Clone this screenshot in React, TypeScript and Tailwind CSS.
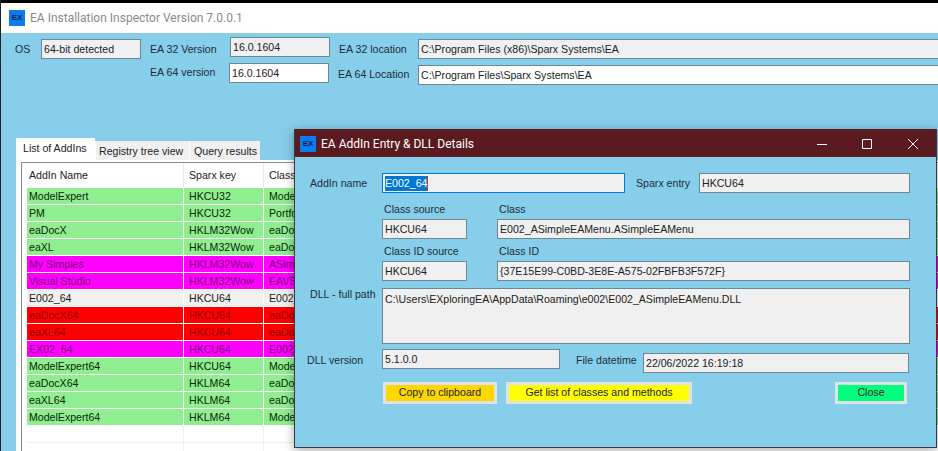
import { ReactNode } from 'react';

const GREEN = 'bg-[#90ee90] text-[#0c1f0c]';
const MAGENTA = 'bg-[#ff00ff] text-[#7d007d]';
const RED = 'bg-[#ff0000] text-[#8f0000]';

const ROWS: { name: string; key: string; cls: string; tone: string }[] = [
  { name: 'ModelExpert',   key: 'HKCU32',    cls: 'ModelExpert.Addin',  tone: GREEN },
  { name: 'PM',            key: 'HKCU32',    cls: 'Portfolio.Addin',    tone: GREEN },
  { name: 'eaDocX',        key: 'HKLM32Wow', cls: 'eaDocX.Addin',       tone: GREEN },
  { name: 'eaXL',          key: 'HKLM32Wow', cls: 'eaDocX.eaXL',        tone: GREEN },
  { name: 'My Simples',    key: 'HKLM32Wow', cls: 'ASimple.Menu',       tone: MAGENTA },
  { name: 'Visual Studio', key: 'HKLM32Wow', cls: 'EAVS.Addin',         tone: MAGENTA },
  { name: 'E002_64',       key: 'HKCU64',    cls: 'E002_ASimpleEAMenu', tone: 'bg-[#f0f0f0] text-[#1c1c1c]' },
  { name: 'eaDocX64',      key: 'HKCU64',    cls: 'eaDocX.Addin',       tone: RED },
  { name: 'eaXL64',        key: 'HKCU64',    cls: 'eaDocX.eaXL',        tone: RED },
  { name: 'EX02_64',       key: 'HKCU64',    cls: 'E002_ASimpleEAMenu', tone: MAGENTA },
  { name: 'ModelExpert64', key: 'HKCU64',    cls: 'ModelExpert.Addin',  tone: GREEN },
  { name: 'eaDocX64',      key: 'HKLM64',    cls: 'eaDocX.Addin',       tone: GREEN },
  { name: 'eaXL64',        key: 'HKLM64',    cls: 'eaDocX.eaXL',        tone: GREEN },
  { name: 'ModelExpert64', key: 'HKLM64',    cls: 'ModelExpert.Addin',  tone: GREEN },
];

function Field({ className = '', children }: { className?: string; children?: ReactNode }) {
  return (
    <div className={`h-[20px] shrink-0 flex items-center overflow-hidden whitespace-nowrap pl-[2px] pt-[1px] border border-[#6d8797] text-[#222] ${className}`}>
      {children}
    </div>
  );
}

function Label({ className = '', children }: { className?: string; children: ReactNode }) {
  return <div className={`shrink-0 whitespace-nowrap leading-[13px] text-[#1d2d36] ${className}`}>{children}</div>;
}

function AppIcon() {
  return (
    <div className="w-4 h-4 shrink-0 bg-[#0a7cf0] flex items-center justify-center text-[8px] leading-none font-bold text-[#06204a] font-['Liberation_Sans',sans-serif]">
      EX
    </div>
  );
}

function Cell({ className = '', children }: { className?: string; children?: ReactNode }) {
  return <div className={`shrink-0 h-full pt-[1px] flex items-center overflow-hidden whitespace-nowrap ${className}`}>{children}</div>;
}

function ListTable() {
  return (
    <div className="ml-[5px] mt-[1px] h-[300px] border border-[#8a8a8a] border-r-0 pl-[5px] bg-white overflow-hidden">
      <div className="flex h-[25px] text-[#222]">
        <Cell className="w-[157px] pl-[2px] border-r border-[#ececec]">AddIn Name</Cell>
        <Cell className="w-[80px] pl-[5px] border-r border-[#ececec]">Sparx key</Cell>
        <Cell className="w-[690px] pl-[5px]">Class</Cell>
      </div>
      {ROWS.map((r, i) => (
        <div key={i} className={`flex h-[17px] border-b border-white ${r.tone}`}>
          <Cell className="w-[157px] pl-[2px] border-r border-white">{r.name}</Cell>
          <Cell className="w-[80px] pl-[5px] border-r border-white">{r.key}</Cell>
          <Cell className="w-[690px] pl-[5px]">{r.cls}</Cell>
        </div>
      ))}
      {[0, 1].map(i => (
        <div key={i} className="flex h-[17px] border-b border-[#f0f0f0]">
          <Cell className="w-[157px] border-r border-[#f0f0f0]" />
          <Cell className="w-[80px] border-r border-[#f0f0f0]" />
        </div>
      ))}
    </div>
  );
}

function DetailsDialog() {
  return (
    <div className="absolute left-[293px] top-[129px] w-[643px] h-[319px] border border-[#3a3a3a] border-t-[#5a1a1f] bg-[#87ceeb] shadow-[0_2px_10px_rgba(0,0,0,0.35)]">
      <div className="h-[27px] bg-[#5a1a1f] flex items-center pl-[5px] text-white text-[12px] font-['Roboto',sans-serif]">
        <AppIcon />
        <span className="ml-[5px]">EA AddIn Entry &amp; DLL Details</span>
        <div className="ml-auto flex items-center">
          <svg width="10" height="10" viewBox="0 0 10 10" className="mr-[35px]"><path d="M0 5.5h10" stroke="#fff" /></svg>
          <svg width="10" height="10" viewBox="0 0 10 10" className="mr-[36px]"><path d="M.5.5h9v9h-9z" fill="none" stroke="#fff" /></svg>
          <svg width="10" height="10" viewBox="0 0 10 10" className="mr-[18px]"><path d="M0 0l10 10M10 0L0 10" stroke="#fff" /></svg>
        </div>
      </div>

      <div className="flex items-center mt-[16px] pl-[15px]">
        <Label className="w-[72px]">AddIn name</Label>
        <Field className="w-[243px] bg-[#f0f0f0] border-[#0078d7]">
          <span className="bg-[#0078d7] text-white leading-[15px] border-r border-[#b4451f]">E002_64</span>
        </Field>
        <Label className="ml-[11px] w-[63px]">Sparx entry</Label>
        <Field className="w-[211px] bg-[#f0f0f0]">HKCU64</Field>
      </div>

      <div className="flex mt-[10px] pl-[89px]">
        <Label className="w-[115px]">Class source</Label>
        <Label>Class</Label>
      </div>
      <div className="flex mt-[3px] pl-[87px]">
        <Field className="w-[85px] bg-[#f0f0f0]">HKCU64</Field>
        <Field className="ml-[30px] w-[413px] bg-[#f0f0f0]">E002_ASimpleEAMenu.ASimpleEAMenu</Field>
      </div>

      <div className="flex mt-[6px] pl-[89px]">
        <Label className="w-[115px]">Class ID source</Label>
        <Label>Class ID</Label>
      </div>
      <div className="flex mt-[3px] pl-[87px]">
        <Field className="w-[85px] bg-[#f0f0f0]">HKCU64</Field>
        <Field className="ml-[30px] w-[413px] bg-[#f0f0f0]">{'{37E15E99-C0BD-3E8E-A575-02FBFB3F572F}'}</Field>
      </div>

      <div className="flex mt-[7px] pl-[15px]">
        <Label className="w-[72px]">DLL - full path</Label>
        <Field className="!h-[56px] w-[528px] !items-start !pt-[3px] bg-[#f0f0f0]">
          C:\Users\EXploringEA\AppData\Roaming\e002\E002_ASimpleEAMenu.DLL
        </Field>
      </div>

      <div className="flex items-start mt-[5px] pl-[12px]">
        <Label className="w-[75px] mt-[5px]">DLL version</Label>
        <Field className="w-[178px] bg-[#f0f0f0]">5.1.0.0</Field>
        <Label className="ml-[16px] w-[67px] mt-[5px]">File datetime</Label>
        <Field className="mt-[4px] w-[266px] bg-[#f0f0f0]">22/06/2022 16:19:18</Field>
      </div>

      <div className="flex mt-[9px] pl-[88px]">
        <button className="w-[114px] h-[22px] border-[3px] border-[#dfe3e5] bg-[#ffd700] text-[#222]">Copy to clipboard</button>
        <button className="ml-[9px] w-[186px] h-[22px] border-[3px] border-[#dfe3e5] bg-[#ffff00] text-[#222]">Get list of classes and methods</button>
        <button className="ml-[143px] w-[72px] h-[22px] border-[3px] border-[#dfe3e5] bg-[#00ff7f] text-[#222]">Close</button>
      </div>
    </div>
  );
}

export default function App() {
  return (
    <div className="relative w-[938px] h-[451px] overflow-hidden bg-[#87ceeb] border-l border-[#222] text-[10.6px] font-['Liberation_Sans',Arial,sans-serif]">
      <div className="h-[3px] bg-black" />
      <div className="h-[30px] bg-white flex items-center pl-[8px] text-[12px] text-[#8a8a8a] font-['Roboto',sans-serif]">
        <AppIcon />
        <span className="ml-[5px]">EA Installation Inspector Version 7.0.0.1</span>
      </div>

      {/* top fields */}
      <div className="flex items-start pt-[4px] pl-[14px]">
        <Label className="w-[26px] mt-[6px]">OS</Label>
        <Field className="mt-[2px] w-[100px] bg-[#f0f0f0]">64-bit detected</Field>
        <Label className="ml-[9px] w-[80px] mt-[6px]">EA 32 Version</Label>
        <Field className="w-[100px] bg-[#f0f0f0]">16.0.1604</Field>
        <Label className="ml-[9px] w-[79px] mt-[6px]">EA 32 location</Label>
        <Field className="mt-[2px] w-[530px] bg-[#f0f0f0]">C:\Program Files (x86)\Sparx Systems\EA</Field>
      </div>
      <div className="flex items-start mt-[4px] pl-[149px]">
        <Label className="w-[79px] mt-[3px]">EA 64 version</Label>
        <Field className="w-[100px] bg-white">16.0.1604</Field>
        <Label className="ml-[9px] w-[80px] mt-[5px]">EA 64 Location</Label>
        <Field className="mt-[2px] w-[530px] bg-white">C:\Program Files\Sparx Systems\EA</Field>
      </div>

      {/* tabs */}
      <div className="mt-[53px] pl-[15px]">
        <div className="flex items-end h-[22px] whitespace-nowrap">
          <div className="w-[79px] h-[22px] pl-[7px] pt-[3px] bg-white text-[#222]">List of AddIns</div>
          <div className="w-[94px] h-[19px] pl-[3px] pt-[3px] bg-[#f0f0f0] border-l border-white text-[#222]">Registry tree view</div>
          <div className="w-[71px] h-[19px] pl-[4px] pt-[3px] bg-[#f0f0f0] border-l border-white text-[#222]">Query results</div>
        </div>
        <div className="bg-white h-[300px] overflow-hidden pt-[1px]">
          <ListTable />
        </div>
      </div>

      <DetailsDialog />
    </div>
  );
}
